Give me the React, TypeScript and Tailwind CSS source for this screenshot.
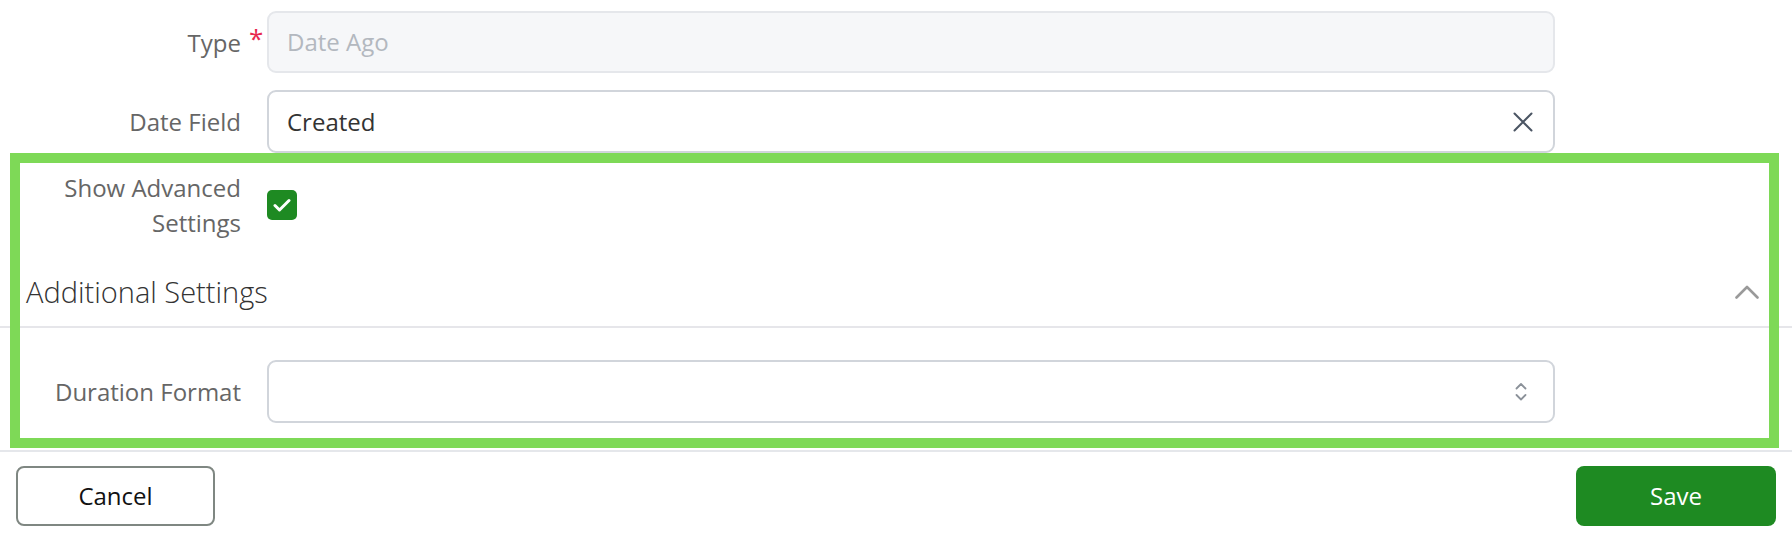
import React from 'react';

// Date Ago field settings form, annotated with a highlight frame

function ClearIcon() {
  return (
    <svg width="20" height="20" viewBox="0 0 20 20" fill="none">
      <path d="M1.5 1.5l17 17M18.5 1.5l-17 17" stroke="#4b5563" strokeWidth="2" strokeLinecap="round" />
    </svg>
  );
}

function UpDownIcon() {
  return (
    <svg width="12" height="22" viewBox="0 0 12 22" fill="none">
      <path d="M1.5 7.5L6 3l4.5 4.5" stroke="#8b9199" strokeWidth="1.8" strokeLinecap="round" strokeLinejoin="round" />
      <path d="M1.5 14L6 18.5l4.5-4.5" stroke="#8b9199" strokeWidth="1.8" strokeLinecap="round" strokeLinejoin="round" />
    </svg>
  );
}

function CollapseIcon() {
  return (
    <svg width="24" height="14" viewBox="0 0 24 14" fill="none">
      <path d="M1.5 12.5L12 2l10.5 10.5" stroke="#9a9a9a" strokeWidth="2.6" strokeLinecap="round" strokeLinejoin="round" />
    </svg>
  );
}

function FieldRow({ label, required, children }: { label: React.ReactNode; required?: boolean; children: React.ReactNode }) {
  return (
    <div className="grid grid-cols-[241px_1288px] gap-x-[26px] items-center">
      <div className="relative text-right text-[24px] leading-[35px] text-[#666666]">
        {label}
        {required && (
          <span className="absolute left-[249px] top-[-4px] text-[26px] leading-[35px] text-[#e8284e]">*</span>
        )}
      </div>
      {children}
    </div>
  );
}

export default function App() {
  return (
    <div className="relative w-[1792px] h-[536px] overflow-hidden bg-white font-['Open_Sans',sans-serif]">
      <div className="flex flex-col pt-[11px]">
        <div className="flex flex-col gap-[17px]">
          <FieldRow label="Type" required>
            <div className="h-[62px] flex items-center px-[18px] rounded-[9px] border-2 border-[#e5e7eb] bg-[#f6f7f9] text-[24px] text-[#b3b8bf]">
              Date Ago
            </div>
          </FieldRow>

          <FieldRow label="Date Field">
            <div className="h-[63px] flex items-center justify-between pl-[18px] pr-[20px] rounded-[9px] border-2 border-[#d1d5db] bg-white text-[24px] text-[#333333]">
              <span>Created</span>
              <ClearIcon />
            </div>
          </FieldRow>

          <FieldRow label={<>Show Advanced<br />Settings</>}>
            <div>
              <div className="w-[30px] h-[30px] rounded-[5px] bg-[#1e8a22] flex items-center justify-center">
                <svg width="18" height="14" viewBox="0 0 18 14" fill="none">
                  <path d="M2 7.5l4.5 4.5L16 2.5" stroke="#ffffff" strokeWidth="3" strokeLinecap="round" strokeLinejoin="round" />
                </svg>
              </div>
            </div>
          </FieldRow>
        </div>

        {/* Additional settings accordion */}
        <div className="mt-[17px] h-[71px] flex items-center justify-between pl-[26px] pr-[33px] border-b-2 border-[#e6e6ea]">
          <span className="text-[29px] leading-[40px] font-light text-[#333333]">Additional Settings</span>
          <CollapseIcon />
        </div>

        <div className="mt-[32px]">
          <FieldRow label="Duration Format">
            <div className="h-[63px] flex items-center justify-end pr-[26px] rounded-[9px] border-2 border-[#d1d5db] bg-white">
              <UpDownIcon />
            </div>
          </FieldRow>
        </div>

        {/* Footer */}
        <div className="mt-[27px] border-t-2 border-[#e5e7eb] flex items-center justify-between px-[16px] pt-[14px]">
          <button className="w-[199px] h-[60px] rounded-[8px] border-2 border-[#7f8782] bg-white text-[24px] text-[#111111]">
            Cancel
          </button>
          <button className="w-[200px] h-[60px] rounded-[8px] bg-[#1e8a22] text-[24px] text-white">
            Save
          </button>
        </div>
      </div>

      {/* Highlight frame */}
      <div className="absolute left-[10px] top-[153px] w-[1769px] h-[295px] border-[10px] border-[#7ed957] pointer-events-none" />
    </div>
  );
}
